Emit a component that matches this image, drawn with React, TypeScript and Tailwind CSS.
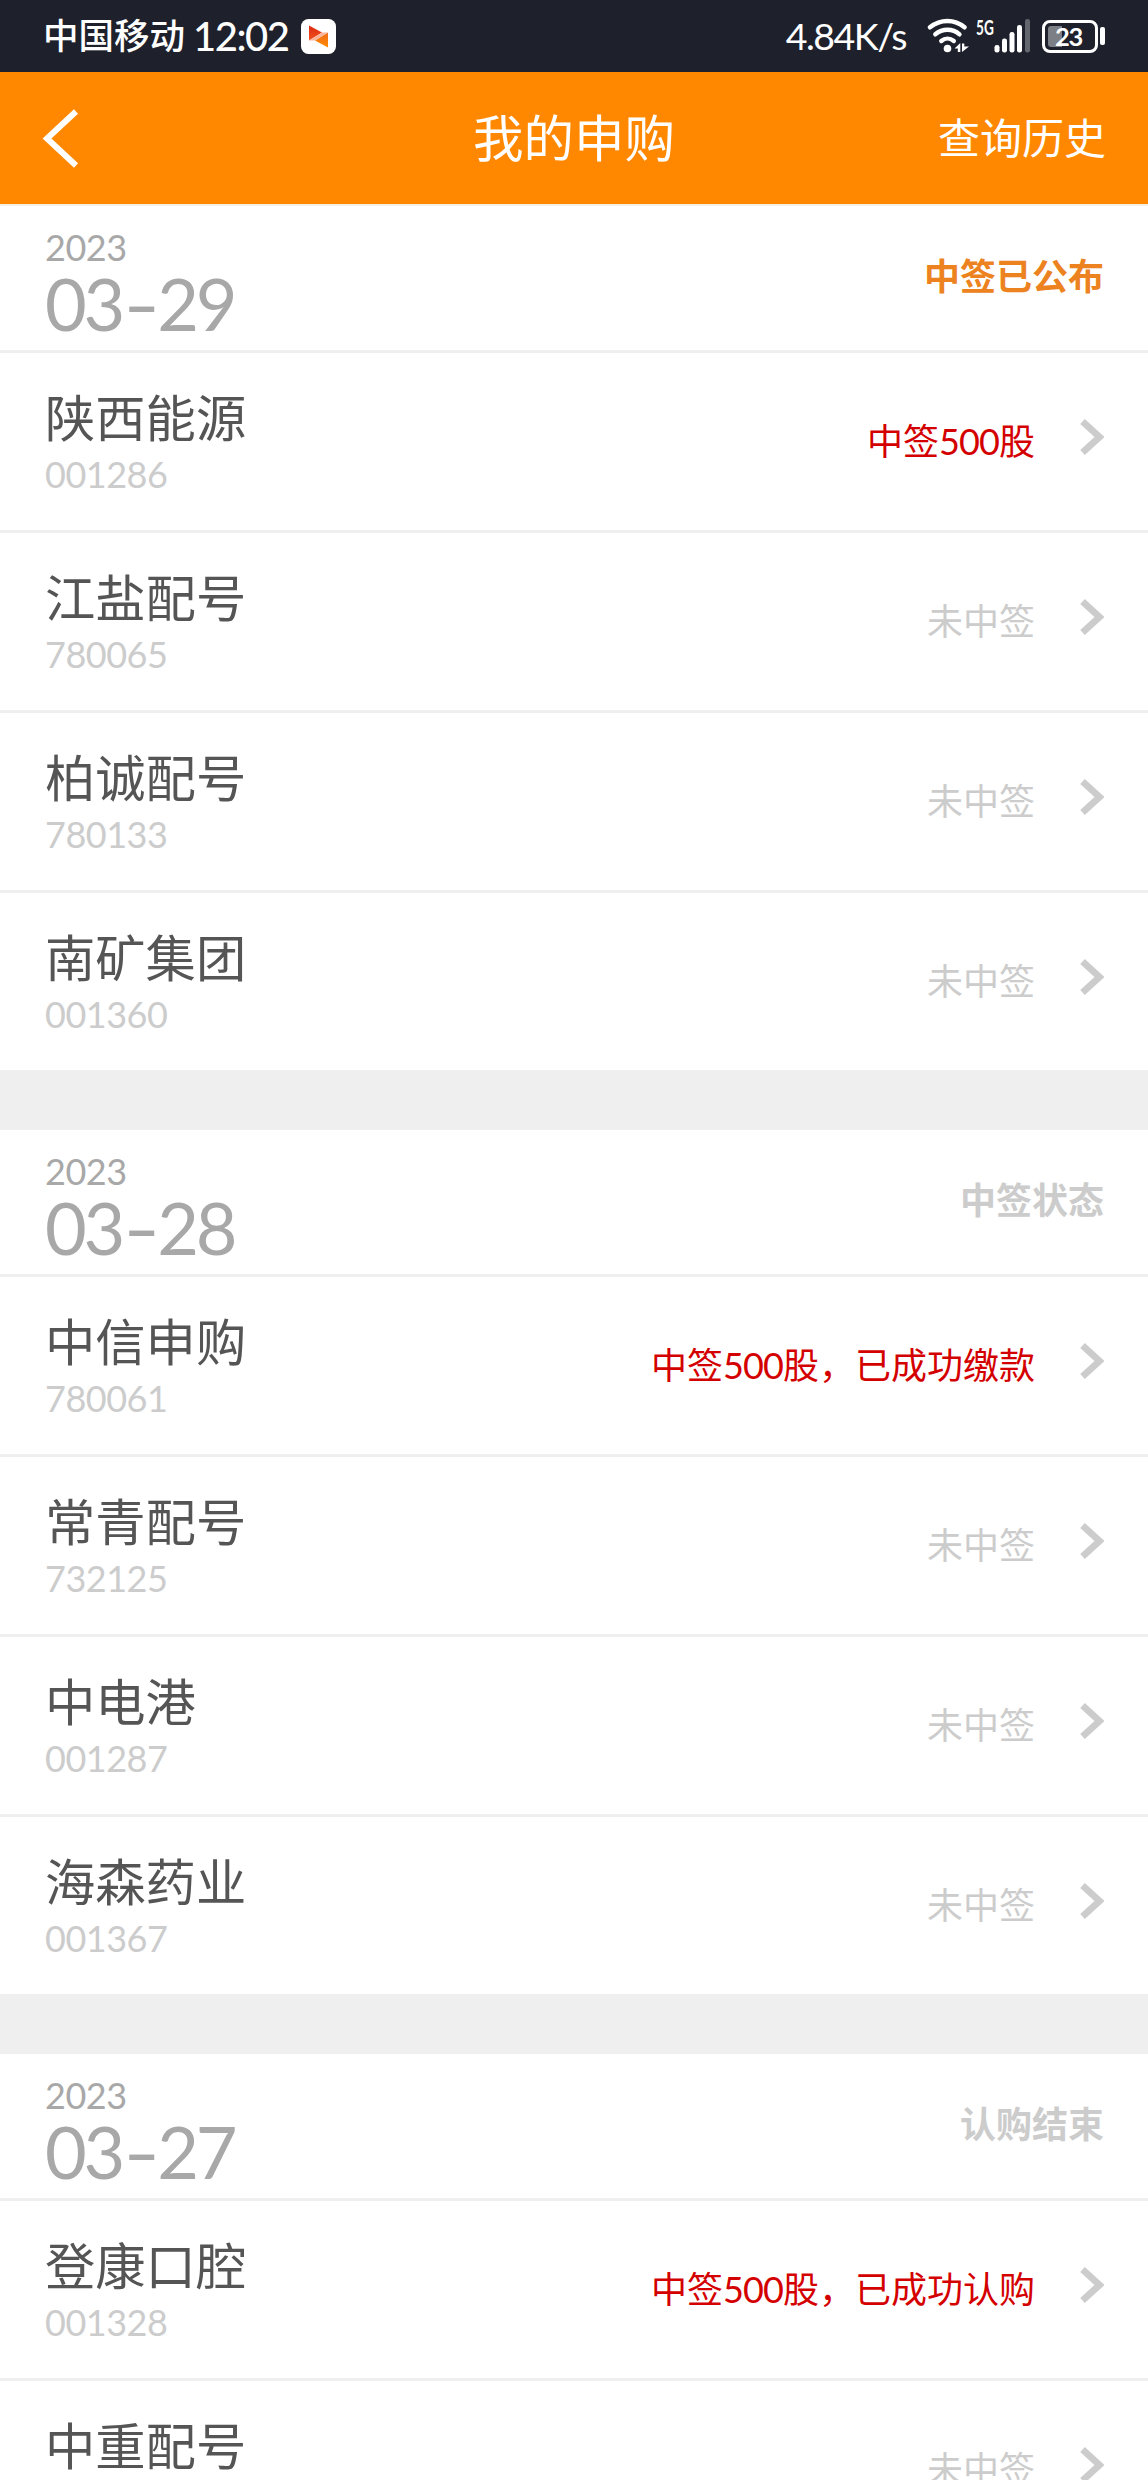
type Tone = "win" | "miss";

interface Item {
  name: string;
  code: string;
  status: string;
  tone: Tone;
}

interface Group {
  year: string;
  month: string;
  day: string;
  label: string;
  active?: boolean;
  items: Item[];
}

const MISS = "未中签";

const groups: Group[] = [
  {
    year: "2023",
    month: "03",
    day: "29",
    label: "中签已公布",
    active: true,
    items: [
      { name: "陕西能源", code: "001286", status: "中签500股", tone: "win" },
      { name: "江盐配号", code: "780065", status: MISS, tone: "miss" },
      { name: "柏诚配号", code: "780133", status: MISS, tone: "miss" },
      { name: "南矿集团", code: "001360", status: MISS, tone: "miss" },
    ],
  },
  {
    year: "2023",
    month: "03",
    day: "28",
    label: "中签状态",
    items: [
      { name: "中信申购", code: "780061", status: "中签500股，已成功缴款", tone: "win" },
      { name: "常青配号", code: "732125", status: MISS, tone: "miss" },
      { name: "中电港", code: "001287", status: MISS, tone: "miss" },
      { name: "海森药业", code: "001367", status: MISS, tone: "miss" },
    ],
  },
  {
    year: "2023",
    month: "03",
    day: "27",
    label: "认购结束",
    items: [
      { name: "登康口腔", code: "001328", status: "中签500股，已成功认购", tone: "win" },
      { name: "中重配号", code: "", status: MISS, tone: "miss" },
    ],
  },
];

function AppBadge() {
  return (
    <svg className="ml-[13px] h-[35px] w-[35px]" viewBox="0 0 35 35">
      <defs>
        <linearGradient id="badgeLeft" x1="0" y1="0" x2="0" y2="1">
          <stop offset="0" stopColor="#d92a10" />
          <stop offset="1" stopColor="#f4511e" />
        </linearGradient>
        <linearGradient id="badgeRight" x1="0" y1="0" x2="0" y2="1">
          <stop offset="0" stopColor="#f06a1c" />
          <stop offset="1" stopColor="#ff8a00" />
        </linearGradient>
      </defs>
      <rect width="35" height="35" rx="7.500" fill="#fff" />
      <path d="M8 6.500 21 13.500 8 21.500Z" fill="url(#badgeLeft)" />
      <path d="M27 13.500V28.500L14 21.500Z" fill="url(#badgeRight)" />
      <path d="M21 13.500H27L14 21.500H8Z" fill="#f9b49a" />
    </svg>
  );
}

function WifiIcon() {
  return (
    <svg className="h-[36px] w-[42px]" viewBox="0 0 42 36" fill="none">
      <g stroke="#fff" strokeWidth="4.400" strokeLinecap="round">
        <path d="M3 9.300C13.500 .9 27.500 .9 37.500 9.300" />
        <path d="M8.300 16.300C15.500 10.300 25.500 10.300 32.500 16.300" />
        <path d="M14.300 23C18 19.800 23 19.800 26.800 23" />
      </g>
      <circle cx="20.500" cy="30.500" r="3.800" fill="#fff" />
      <path d="M27.500 30.500 33.300 25V34H30.800V30.500Z" fill="#fff" />
      <path d="M35 25.500H37.300V28.500H42L35 34Z" fill="#fff" />
    </svg>
  );
}

function SignalIcon() {
  return (
    <svg className="h-[36px] w-[37px]" viewBox="0 0 37 36" fill="#fff">
      <rect x="0.500" y="27" width="5" height="7.500" rx="2.300" />
      <rect x="8" y="20.500" width="5" height="14" rx="2.300" />
      <rect x="15.500" y="14" width="5" height="20.500" rx="2.300" />
      <rect x="23" y="7" width="5" height="27.500" rx="2.300" />
      <rect x="31" y="1" width="5" height="33.500" rx="2.300" fill="#64666e" />
    </svg>
  );
}

function Battery() {
  return (
    <div className="ml-[11px] flex items-center">
      <div className="flex h-[33px] w-[56px] items-center rounded-[8px] border-[3px] border-white">
        <div className="ml-[3px] h-[21px] w-[14px] rounded-l-[3px] bg-[#7d7f86]" />
        <span className="-ml-[7px] text-[25.500px] leading-[26px] font-bold tracking-[-1.200px]">23</span>
      </div>
      <div className="ml-[2px] h-[18px] w-[5px] rounded-[2px] bg-white" />
    </div>
  );
}

function StatusBar() {
  return (
    <div className="flex h-[72px] items-center bg-[#1e212b] pr-[43px] pl-[43px] text-white">
      <span className="text-[35.500px] leading-[40px] font-medium">中国移动</span>
      <span className="ml-[8px] w-[95px] text-[40px] leading-[40px] font-medium tracking-[-1.500px] whitespace-nowrap">
        12:02
      </span>
      <AppBadge />
      <div className="ml-auto flex items-center">
        <span className="mr-[21px] text-[37.500px] leading-[40px] tracking-[-1.500px]">4.84K/s</span>
        <WifiIcon />
        <span className="mr-px mb-[19px] ml-[7px] w-[17px] origin-left scale-x-[0.68] text-[20px] leading-[20px] font-bold">
          5G
        </span>
        <SignalIcon />
        <Battery />
      </div>
    </div>
  );
}

function NavBar() {
  return (
    <header className="grid h-[134px] grid-cols-3 items-center border-b-2 border-[#f5efe6] bg-[#ff8800] pr-[42px] pl-[42px] text-white">
      <svg className="h-[61px] w-[37px]" viewBox="0 0 37 61" fill="none">
        <path d="M34 3.500 5 30.500 34 57.500" stroke="#fff" strokeWidth="6" />
      </svg>
      <h1 className="text-center text-[50.500px] leading-[60px]">我的申购</h1>
      <span className="text-right text-[42px] leading-[60px]">查询历史</span>
    </header>
  );
}

function Chevron() {
  return (
    <svg className="mb-[9px] ml-[45px] h-[36px] w-[24px]" viewBox="0 0 24 36" fill="none">
      <path d="M2.500 2.500 19.500 18 2.500 33.500" stroke="#ccc" strokeWidth="6.800" />
    </svg>
  );
}

/* Latin digits sit slightly tighter than the surrounding Chinese characters. */
function StatusText({ text }: { text: string }) {
  return (
    <>
      {text.split(/(\d+)/).map((part, i) =>
        /^\d+$/.test(part) ? (
          <span key={i} className="tracking-[-0.900px]">
            {part}
          </span>
        ) : (
          part
        ),
      )}
    </>
  );
}

function Row({ item }: { item: Item }) {
  return (
    <li className="flex h-[180px] items-center border-t-[3px] border-[#efefef] pr-[44px] pl-[45px]">
      <div className="flex h-full flex-col pt-[31px]">
        <span className="text-[50.300px] leading-[68px] text-[#555]">{item.name}</span>
        <span className="text-[36px] leading-[45px] tracking-[-0.500px] text-[#ccc]">{item.code}</span>
      </div>
      <span
        className={
          item.tone === "win"
            ? "mb-[2px] ml-auto text-[36px] leading-[48px] text-[#d40000]"
            : "mb-[2px] ml-auto text-[36px] leading-[48px] text-[#ccc]"
        }
      >
        <StatusText text={item.status} />
      </span>
      <Chevron />
    </li>
  );
}

function GroupSection({ group }: { group: Group }) {
  return (
    <section>
      <div className="flex h-[144px] items-center justify-between pr-[44px] pl-[45px]">
        <div className="flex h-full flex-col pt-[20px] text-[#a8a8a8]">
          <span className="text-[36px] leading-[42px] tracking-[-0.500px]">{group.year}</span>
          <span className="flex text-[72px] leading-[70px] tracking-[-3.200px]">
            <span>{group.month}</span>
            <span className="w-[35px] scale-x-[1.400] text-center">-</span>
            <span>{group.day}</span>
          </span>
        </div>
        <span
          className={
            group.active
              ? "mb-[4px] text-[36px] leading-[48px] font-bold text-[#ec8220]"
              : "mb-[4px] text-[36px] leading-[48px] font-bold text-[#ccc]"
          }
        >
          {group.label}
        </span>
      </div>
      <ul>
        {group.items.map((item) => (
          <Row key={item.name} item={item} />
        ))}
      </ul>
    </section>
  );
}

export default function App() {
  return (
    <div className="h-[2480px] w-[1148px] overflow-hidden bg-white font-[Lato,'Noto_Sans_CJK_SC',sans-serif]">
      <StatusBar />
      <NavBar />
      <main className="flex flex-col gap-[60px] bg-[#efefef] *:bg-white">
        {groups.map((group) => (
          <GroupSection key={group.day} group={group} />
        ))}
      </main>
    </div>
  );
}
